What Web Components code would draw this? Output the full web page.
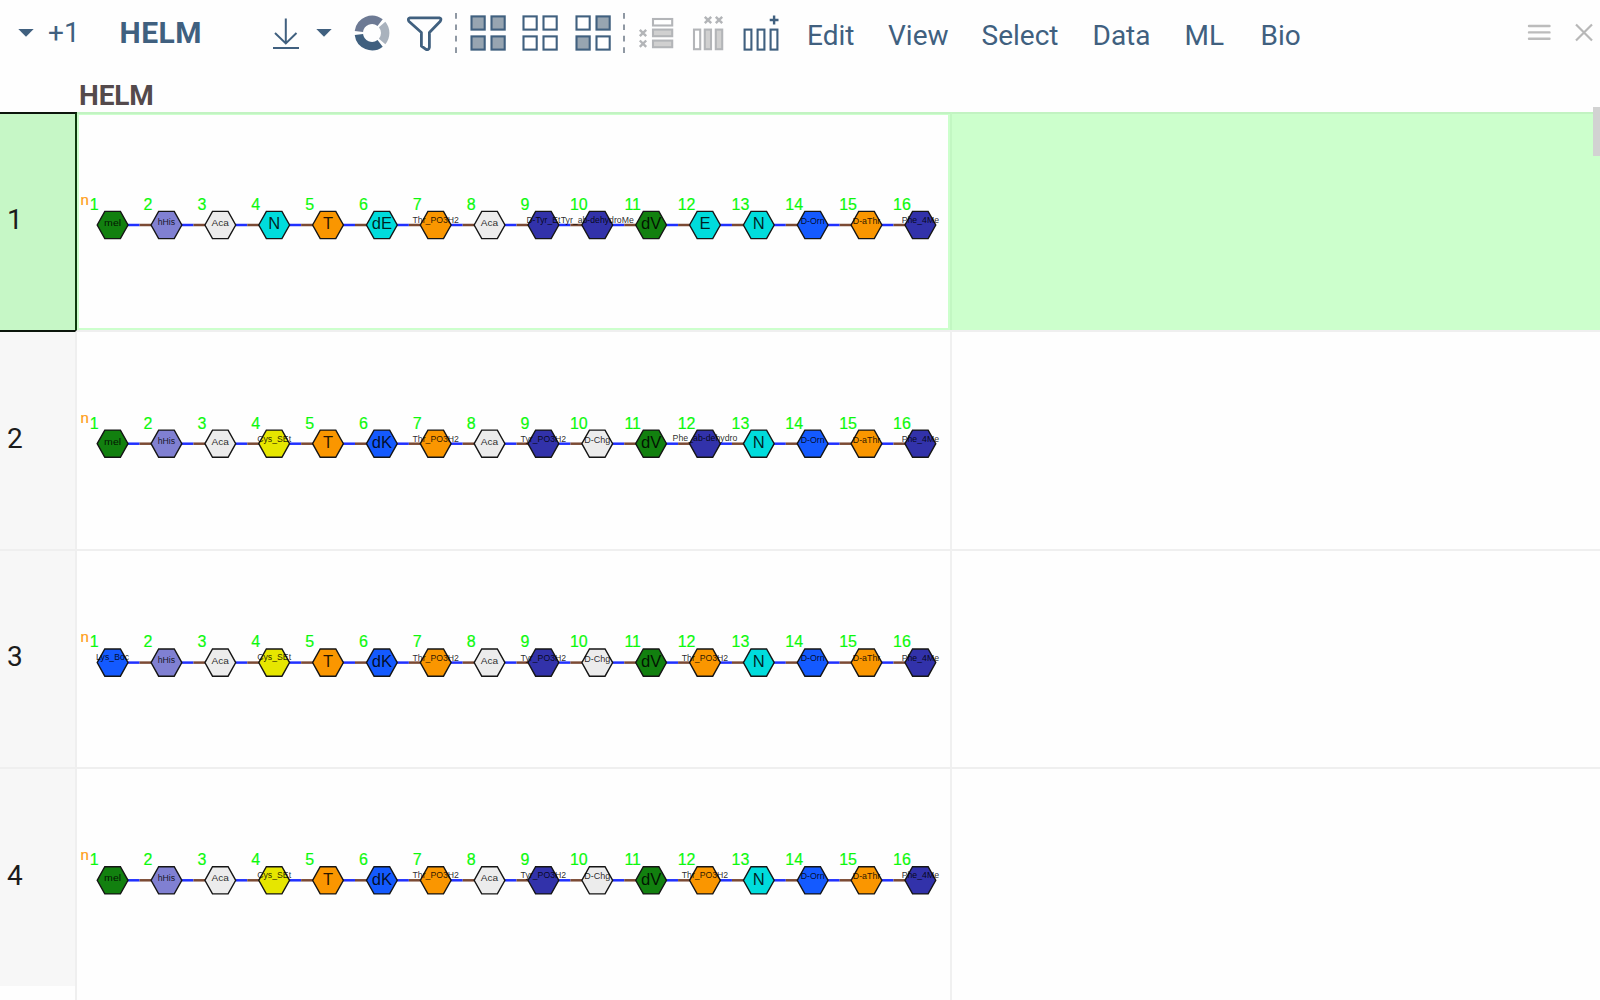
<!DOCTYPE html>
<html lang="en">
<head>
<meta charset="utf-8">
<title>HELM</title>
<style>
html,body{margin:0;height:100%;overflow:hidden;background:#fefefe}
body{font-family:Roboto,"Liberation Sans",sans-serif}
</style>
</head>
<body>
<helm-app></helm-app>
<script>
const BLUE = '#40607f';

class ToolIcon extends HTMLElement {
  connectedCallback() {
    const x = +this.getAttribute('x'), w = +this.getAttribute('w');
    this.attachShadow({mode: 'open'}).innerHTML =
      `<style>:host{display:block;flex:none;width:${w}px;height:70px}svg{display:block}</style>
       <svg width="${w}" height="70" viewBox="${x} 0 ${w} 70" fill="none">${ToolIcon.draw(this.getAttribute('name'))}</svg>`;
  }
  static box(x, y, w, h, fill, stroke) {
    return `<rect x="${x + 1}" y="${y + 1}" width="${w - 2}" height="${h - 2}" fill="${fill}" stroke="${stroke}" stroke-width="2.1"/>`;
  }
  static tiles(x, fills) {
    return fills.map((f, i) => ToolIcon.box(x + (i % 2) * 20, i < 2 ? 15.4 : 35.4, 15.2, 15.2, f ? '#97a5b1' : '#fff', BLUE)).join('');
  }
  static cross(x, y) {
    return `<path d="M${x - 3.2} ${y - 3.2}l6.4 6.4m0 -6.4l-6.4 6.4" stroke="#b3b5b8" stroke-width="2.4"/>`;
  }
  static arc(a, b, color) {
    const p = d => (372 + 13.2 * Math.cos(d * Math.PI / 180)).toFixed(2) + ' ' + (33 + 13.2 * Math.sin(d * Math.PI / 180)).toFixed(2);
    return `<path d="M${p(a)}A13.2 13.2 0 0 1 ${p(b)}" stroke="${color}" stroke-width="8.4"/>`;
  }
  static draw(name) {
    const T = ToolIcon, g = '#b3b5b8';
    switch (name) {
      case 'caret1': return `<path d="M18.3 29h15.4L26 36.8z" fill="${BLUE}"/>`;
      case 'caret2': return `<path d="M316.3 29h15.4L324 36.8z" fill="${BLUE}"/>`;
      case 'download': return `<path d="M285.8 18.5V43M275 33l10.8 10.4L296.5 33M273 48h26" stroke="${BLUE}" stroke-width="2"/>`;
      case 'ring': return T.arc(187, 308, '#6d7a94') + T.arc(-40, 40, '#a9b2bd') + T.arc(52, 173, BLUE);
      case 'filter': return `<path d="M410 17.8H439.3Q442 18.5 440.3 21.2L429.4 32.5V47.2Q428.8 50.5 426 49.4L421.4 46V32.5L408.8 21.2Q407.4 18.5 410 17.8z" stroke="${BLUE}" stroke-width="2.8" stroke-linejoin="round"/>`;
      case 'sep1': return `<path d="M456 13v40" stroke="#8f98a3" stroke-width="2" stroke-dasharray="5.7 5.7"/>`;
      case 'sep2': return `<path d="M624 13v40" stroke="#8f98a3" stroke-width="2" stroke-dasharray="5.7 5.7"/>`;
      case 'all': return T.tiles(470.5, [1, 1, 1, 1]);
      case 'none': return T.tiles(522.5, [0, 0, 0, 0]);
      case 'invert': return T.tiles(575.5, [0, 1, 1, 0]);
      case 'rows': return T.box(652, 18, 21.2, 8.5, '#fff', g) + T.box(652, 28.6, 21.2, 8.6, '#d0d0d0', g) + T.box(652, 39.6, 21.2, 8.6, '#d0d0d0', g) + T.cross(643, 33) + T.cross(643, 43.7);
      case 'cols': return T.box(693, 28.6, 8.2, 21.6, '#fff', g) + T.box(703.8, 28.6, 8.2, 21.6, '#d0d0d0', g) + T.box(714.8, 28.6, 8.4, 21.6, '#d0d0d0', g) + T.cross(708, 20) + T.cross(719, 20);
      case 'add': return [743.6, 756.6, 769.6].map(x => T.box(x, 28.6, 8.8, 22, '#fff', BLUE)).join('') + `<path d="M769.7 20h8.8M774.1 15.6v8.8" stroke="${BLUE}" stroke-width="2.4"/>`;
      case 'burger': return `<path d="M1529 26h20.5M1529 32.4h20.5M1529 38.8h20.5" stroke="#bcbcbc" stroke-width="2.4" stroke-linecap="round"/>`;
      case 'close': return `<path d="M1576 24.5l16 16m0 -16l-16 16" stroke="#b8b8b8" stroke-width="2.2"/>`;
    }
    return '';
  }
}
customElements.define('tool-icon', ToolIcon);

class MenuLabel extends HTMLElement {
  connectedCallback() {
    this.attachShadow({mode: 'open'}).innerHTML =
      `<style>:host{display:block;flex:none;box-sizing:border-box;width:${this.getAttribute('w')}px;padding-top:${this.getAttribute('top')}px;
        font-size:${this.getAttribute('size') || 28}px;font-weight:${this.getAttribute('weight') || 400};letter-spacing:${this.getAttribute('spacing') || 0}px;line-height:32px;color:${BLUE};white-space:nowrap}</style><slot></slot>`;
  }
}
customElements.define('menu-label', MenuLabel);

const COLORS = {
  mel: '#12800f', hHis: '#8080d2', Aca: '#ececec', N: '#00dcdc', E: '#00dcdc', dE: '#00dcdc', T: '#fa9600',
  Thr_PO3H2: '#fa9600', 'D-Tyr_Et': '#3232aa', 'Tyr_ab-dehydroMe': '#3232aa', dV: '#12800f', 'D-Orn': '#145aff',
  'D-aThr': '#fa9600', Phe_4Me: '#3232aa', Cys_SEt: '#e6e600', dK: '#145aff', Tyr_PO3H2: '#3232aa', 'D-Chg': '#ececec',
  'Phe_ab-dehydro': '#3232aa', Lys_Boc: '#145aff'
};
// label width and baseline offset from the centre of the monomer
const SMALL = {
  mel: [17, .8], hHis: [17.4, .2], Aca: [17.4, 1], Thr_PO3H2: [46.4, -2], Tyr_PO3H2: [45.6, -2], 'D-Tyr_Et': [34, -2],
  'Tyr_ab-dehydroMe': [73, -2.2], 'Phe_ab-dehydro': [64.8, -3], 'D-Orn': [24, -1.2], 'D-aThr': [27.5, -1.2], Phe_4Me: [37.4, -2],
  Cys_SEt: [33.8, -2.2], Lys_Boc: [33.2, -2.2], 'D-Chg': [26, -1]
};

class HelmSequence extends HTMLElement {
  connectedCallback() {
    const cy = +this.getAttribute('cy'), step = 53.85, x0 = 35.6;
    const items = this.getAttribute('monomers').split(' ');
    let s = '';
    items.forEach((m, i) => {
      const x = x0 + i * step;
      if (i < items.length - 1)
        s += `<path d="M${x + 15} ${cy}h12" stroke="#2030ff"/><path d="M${x + 27} ${cy}h12.5" stroke="#7b4a34"/>`;
    });
    items.forEach((m, i) => {
      const x = x0 + i * step;
      s += `<path d="M${x - 15.4} ${cy}L${x - 7.8} ${cy - 13.6}H${x + 7.8}L${x + 15.4} ${cy}L${x + 7.8} ${cy + 13.6}H${x - 7.8}z" fill="${COLORS[m]}" stroke="#151515" stroke-width="1.4"/>`;
      s += `<text class="num" x="${x - 18.4}" y="${cy - 15.2}">${i + 1}</text>`;
    });
    items.forEach((m, i) => {
      const x = x0 + i * step, k = SMALL[m];
      s += k
        ? `<text class="small" x="${x - k[0] / 2}" y="${cy + k[1]}" text-anchor="start" textLength="${k[0]}" lengthAdjust="spacingAndGlyphs">${m}</text>`
        : `<text class="big" x="${x}" y="${cy + 4.3}">${m}</text>`;
    });
    this.attachShadow({mode: 'open'}).innerHTML =
      `<style>:host{display:block;width:873px;height:100%}svg{display:block;overflow:visible}
        svg{font-family:"Liberation Sans",sans-serif;stroke-width:2.5}
        .num{font-size:16px;fill:#0cf80c;text-anchor:middle;stroke:#0cf80c;stroke-width:.2}
        .big{font-size:16.6px;fill:#000;fill-opacity:.85;text-anchor:middle}
        .small{font-size:9.6px;fill:#000;fill-opacity:.85}
        .n{font-size:15px;fill:#ff9c10;stroke:#ff9c10;stroke-width:.2}</style>
       <svg width="873" height="215"><text class="n" x="3.4" y="${cy - 20.4}">n</text>${s.replace(/<text class="(big|small)"/g, '<text stroke="none" class="$1"')}</svg>`;
  }
}
customElements.define('helm-sequence', HelmSequence);

class GridRow extends HTMLElement {
  connectedCallback() {
    const cur = this.hasAttribute('current'), after = this.hasAttribute('after-current');
    const last = this.hasAttribute('last');
    this.attachShadow({mode: 'open'}).innerHTML =
      `<style>
        :host{display:flex;flex:none;height:${this.getAttribute('h')}px}
        *{box-sizing:border-box}
        .head{width:77px;border-top:2px solid ${cur || after ? '#0c160c' : '#efefef'};border-right:2px solid ${cur ? '#0c3a0c' : '#efefef'};
          background:${cur ? '#c6f7c6' : '#f7f7f7'};font:400 28px/32px Roboto,sans-serif;color:#1c1c1c;padding:${this.getAttribute('pad')}px 0 0 7px;${last ? 'background:linear-gradient(#f7f7f7 217px,#fefefe 217px);' : ''}}
        .cell{width:875px;border-top:2px solid ${cur ? '#c2f3c2' : '#efefef'};border-right:2px solid ${cur ? '#c2f7c2' : '#f0f0f0'};background:#fefefe}
        .cell>div{height:100%;${cur ? 'border:2px solid #ccffcc;border-top-width:1px;' : ''}}
        helm-sequence{${cur ? 'margin:-1px 0 0 -2px' : ''}}
        .rest{flex:1;border-top:2px solid ${cur ? '#c2f3c2' : '#efefef'};background:${cur ? '#ccffcc' : '#fefefe'}}
      </style>
      <div class="head">${this.getAttribute('n')}</div>
      <div class="cell"><div><helm-sequence cy="${this.getAttribute('cy')}" monomers="${this.getAttribute('monomers')}"></helm-sequence></div></div>
      <div class="rest"></div>`;
  }
}
customElements.define('grid-row', GridRow);

class HelmApp extends HTMLElement {
  connectedCallback() {
    this.attachShadow({mode: 'open'}).innerHTML =
      `<style>
        :host{display:flex;flex-direction:column;position:relative;width:1600px;height:1000px;overflow:hidden}
        nav{display:flex;height:70px;flex:none}
        .fill{flex:1}
        header{height:42px;flex:none;box-sizing:border-box;padding:10px 0 0 79px;font-size:28px;line-height:32px;font-weight:700;letter-spacing:-.1px;color:#544a4c}
        main{display:flex;flex-direction:column}
        .thumb{position:absolute;right:0;top:107px;width:7px;height:49px;background:#d2d2d2}
      </style>
      <nav>
        <tool-icon name="caret1" x="0" w="48"></tool-icon>
        <menu-label w="71.5" top="17">+1</menu-label>
        <menu-label w="145.5" top="17" size="30" weight="700" spacing=".45">HELM</menu-label>
        <tool-icon name="download" x="265" w="40"></tool-icon>
        <tool-icon name="caret2" x="305" w="40"></tool-icon>
        <tool-icon name="ring" x="345" w="55"></tool-icon>
        <tool-icon name="filter" x="400" w="50"></tool-icon>
        <tool-icon name="sep1" x="450" w="15"></tool-icon>
        <tool-icon name="all" x="465" w="50"></tool-icon>
        <tool-icon name="none" x="515" w="50"></tool-icon>
        <tool-icon name="invert" x="565" w="53"></tool-icon>
        <tool-icon name="sep2" x="618" w="14"></tool-icon>
        <tool-icon name="rows" x="632" w="53"></tool-icon>
        <tool-icon name="cols" x="685" w="50"></tool-icon>
        <tool-icon name="add" x="735" w="72"></tool-icon>
        <menu-label w="81" top="20">Edit</menu-label>
        <menu-label w="93.5" top="20">View</menu-label>
        <menu-label w="111" top="20">Select</menu-label>
        <menu-label w="92" top="20">Data</menu-label>
        <menu-label w="76" top="20">ML</menu-label>
        <menu-label w="60" top="20">Bio</menu-label>
        <div class="fill"></div>
        <tool-icon name="burger" x="1520" w="45"></tool-icon>
        <tool-icon name="close" x="1565" w="35"></tool-icon>
      </nav>
      <header>HELM</header>
      <main>
        <grid-row current n="1" h="218" pad="90" cy="111" monomers="mel hHis Aca N T dE Thr_PO3H2 Aca D-Tyr_Et Tyr_ab-dehydroMe dV E N D-Orn D-aThr Phe_4Me"></grid-row>
        <grid-row after-current n="2" h="219" pad="91" cy="111.7" monomers="mel hHis Aca Cys_SEt T dK Thr_PO3H2 Aca Tyr_PO3H2 D-Chg dV Phe_ab-dehydro N D-Orn D-aThr Phe_4Me"></grid-row>
        <grid-row n="3" h="218" pad="90" cy="111.6" monomers="Lys_Boc hHis Aca Cys_SEt T dK Thr_PO3H2 Aca Tyr_PO3H2 D-Chg dV Thr_PO3H2 N D-Orn D-aThr Phe_4Me"></grid-row>
        <grid-row last n="4" h="233" pad="91" cy="111.3" monomers="mel hHis Aca Cys_SEt T dK Thr_PO3H2 Aca Tyr_PO3H2 D-Chg dV Thr_PO3H2 N D-Orn D-aThr Phe_4Me"></grid-row>
      </main>
      <div class="thumb"></div>`;
  }
}
customElements.define('helm-app', HelmApp);
</script>
</body>
</html>
